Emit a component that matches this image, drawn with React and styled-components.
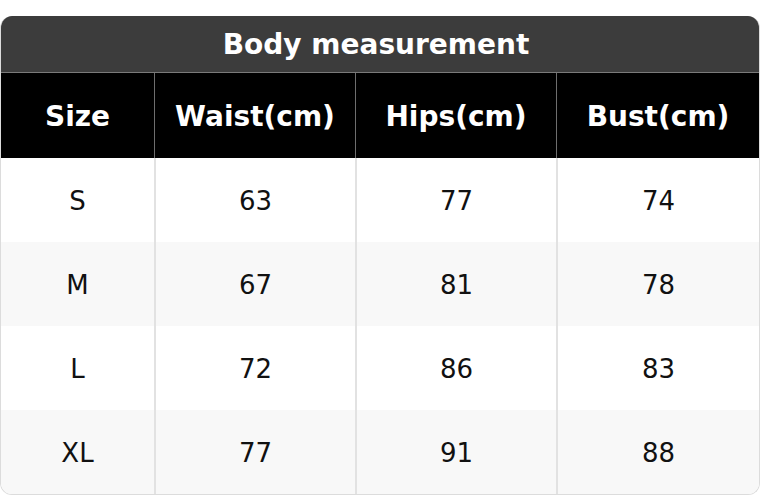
import React from 'react';
import styled, { createGlobalStyle } from 'styled-components';

const GlobalStyle = createGlobalStyle`
  html, body {
    margin: 0;
    padding: 0;
    background: #fff;
  }
  body {
    font-family: "DejaVu Sans", "Liberation Sans", sans-serif;
  }
`;

const rows = [
  { size: 'S', waist: 63, hips: 77, bust: 74 },
  { size: 'M', waist: 67, hips: 81, bust: 78 },
  { size: 'L', waist: 72, hips: 86, bust: 83 },
  { size: 'XL', waist: 77, hips: 91, bust: 88 },
];

const columns = ['Size', 'Waist(cm)', 'Hips(cm)', 'Bust(cm)'];

const widths = [153, 201, 201, 203];

const Page = styled.div`
  padding-top: 16px;
  width: 760px;
`;

const Table = styled.table`
  width: 760px;
  table-layout: fixed;
  border-collapse: separate;
  border-spacing: 0;
  border: 1px solid #dcdcdc;
  border-top: none;
  border-radius: 12px;
  overflow: hidden;
  box-sizing: border-box;
`;

const Title = styled.th`
  height: 56px;
  padding: 0 8px 0 0;
  background: #3c3c3c;
  color: #fff;
  font-size: 28px;
  font-weight: bold;
  text-align: center;
  border-bottom: 1px solid #7a7a7a;
`;

const HeadCell = styled.th`
  height: 85px;
  padding: 1px 0 0;
  background: #000;
  color: #fff;
  font-size: 28px;
  font-weight: bold;
  text-align: center;
  border-left: ${p => (p.$first ? 'none' : '1px solid #6e6e6e')};
  box-sizing: border-box;
`;

const Row = styled.tr`
  background: ${p => (p.$alt ? '#f8f8f8' : '#fff')};
`;

const Cell = styled.td`
  height: 84px;
  padding: 2px 0 0;
  font-size: 26px;
  color: #111;
  text-align: center;
  border-left: ${p => (p.$first ? 'none' : '2px solid #e2e2e2')};
  box-sizing: border-box;
`;

export default function App() {
  return (
    <Page>
      <GlobalStyle />
      <Table>
        <colgroup>
          {widths.map((w, i) => (
            <col key={i} style={{ width: w }} />
          ))}
        </colgroup>
        <thead>
          <tr>
            <Title colSpan={4}>Body measurement</Title>
          </tr>
          <tr>
            {columns.map((c, i) => (
              <HeadCell key={c} $first={i === 0}>
                {c}
              </HeadCell>
            ))}
          </tr>
        </thead>
        <tbody>
          {rows.map((r, i) => (
            <Row key={r.size} $alt={i % 2 === 1}>
              <Cell $first>{r.size}</Cell>
              <Cell>{r.waist}</Cell>
              <Cell>{r.hips}</Cell>
              <Cell>{r.bust}</Cell>
            </Row>
          ))}
        </tbody>
      </Table>
    </Page>
  );
}
